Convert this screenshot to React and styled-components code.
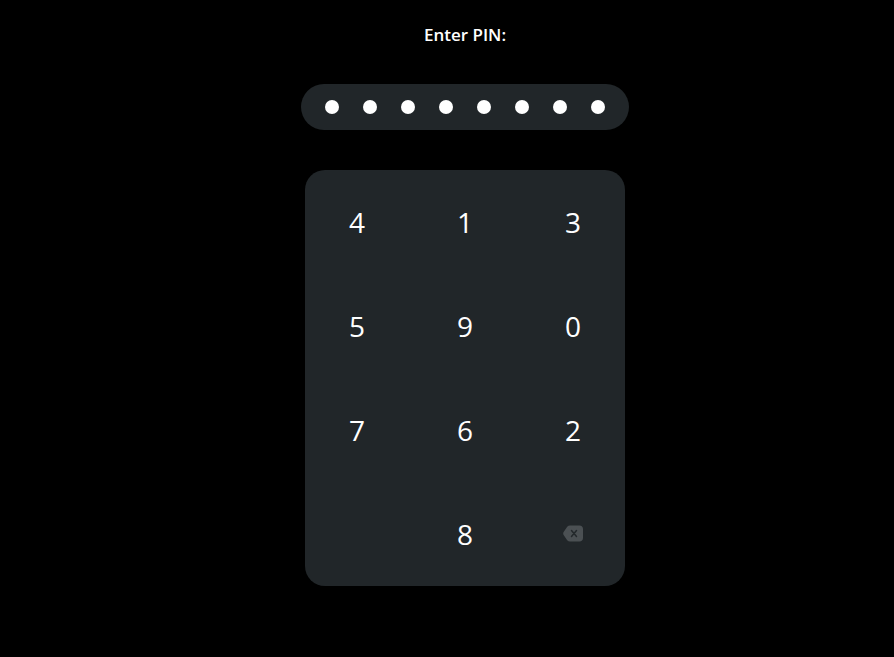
import React from 'react'
import styled, { createGlobalStyle } from 'styled-components'

const GlobalStyle = createGlobalStyle`
  html, body {
    margin: 0;
    background: #000;
    font-family: "Open Sans", "Noto Sans", sans-serif;
  }
`

const digits = ['4', '1', '3', '5', '9', '0', '7', '6', '2']

const App = () => {
  return (
    <Page>
      <GlobalStyle />
      <Title>Enter PIN:</Title>
      <PinField>
        {Array.from({ length: 8 }).map((_, i) => (
          <Dot key={i} />
        ))}
      </PinField>
      <Keypad>
        {digits.map(d => (
          <Key key={d}>{d}</Key>
        ))}
        <Key />
        <Key>8</Key>
        <Key>
          <BackspaceIcon viewBox="0 0 20 17">
            <path
              d="M7 0.5H16.5C18.6 0.5 20 2 20 4V13C20 15 18.6 16.5 16.5 16.5H7C5.9 16.5 5 16.1 4.2 15.3L0.8 10.3C0 9.2 0 7.8 0.8 6.7L4.2 1.7C5 0.9 5.9 0.5 7 0.5Z"
              fill="#4b5053"
            />
            <path d="M8.5 5.5L13.5 11.5M13.5 5.5L8.5 11.5" stroke="#23282b" strokeWidth="1.5" strokeLinecap="round" />
          </BackspaceIcon>
        </Key>
      </Keypad>
    </Page>
  )
}

export default App

const Page = styled.div`
  width: 894px;
  height: 657px;
  box-sizing: border-box;
  padding: 24px 0 0 36px;
  background: #000;
  display: flex;
  flex-direction: column;
  align-items: center;
  overflow: hidden;
`
const Title = styled.div`
  height: 22px;
  line-height: 22px;
  color: #fff;
  font-size: 17px;
  font-weight: 600;
`
const PinField = styled.div`
  width: 328px;
  height: 46px;
  margin-top: 38px;
  border-radius: 23px;
  background: #212629;
  display: flex;
  justify-content: center;
  align-items: center;
  gap: 24px;
`
const Dot = styled.span`
  width: 14px;
  height: 14px;
  border-radius: 50%;
  background: #fff;
`
const Keypad = styled.div`
  width: 320px;
  height: 416px;
  margin-top: 40px;
  border-radius: 20px;
  background: #212629;
  display: grid;
  grid-template-columns: repeat(3, 108px);
  grid-auto-rows: 104px;
  justify-content: center;
`
const Key = styled.div`
  display: flex;
  justify-content: center;
  align-items: center;
  color: #fff;
  font-size: 28px;
`
const BackspaceIcon = styled.svg`
  width: 20px;
  height: 17px;
  margin-bottom: 2px;
`
